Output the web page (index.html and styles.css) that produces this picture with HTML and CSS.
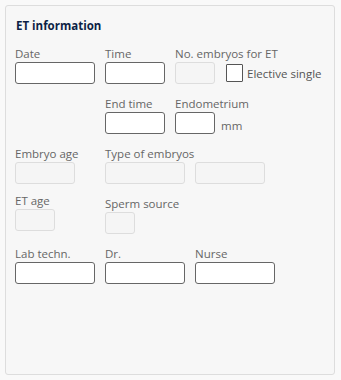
FILE: index.html
```html
<!DOCTYPE html>
<html lang="en">
<head>
    <meta charset="UTF-8">
    <meta name="viewport" content="width=device-width, initial-scale=1.0">
    <title>ET information</title>
    <link rel="stylesheet" href="styles.css">
</head>
<body>
    <div class="panel">
        <h3 class="panel-title">ET information</h3>

        <div class="row">
            <div class="field w80">
                <label>Date</label>
                <input type="text" class="w80">
            </div>
            <div class="field w60">
                <label>Time</label>
                <input type="text" class="w60">
            </div>
            <div class="field">
                <label>No. embryos for ET</label>
                <div class="inline">
                    <input type="text" class="w40" disabled>
                    <span class="check"></span>
                    <span class="check-label">Elective single</span>
                </div>
            </div>
        </div>

        <div class="row">
            <div class="field w80"></div>
            <div class="field w60">
                <label>End time</label>
                <input type="text" class="w60">
            </div>
            <div class="field">
                <label>Endometrium</label>
                <div class="inline">
                    <input type="text" class="w40">
                    <span class="unit">mm</span>
                </div>
            </div>
        </div>

        <div class="row">
            <div class="field w80">
                <label>Embryo age</label>
                <input type="text" class="w60" disabled>
            </div>
            <div class="field">
                <label>Type of embryos</label>
                <div class="inline">
                    <input type="text" class="w80" disabled>
                    <input type="text" class="w70" disabled>
                </div>
            </div>
        </div>

        <div class="row">
            <div class="field w80 raised">
                <label>ET age</label>
                <input type="text" class="w40" disabled>
            </div>
            <div class="field">
                <label>Sperm source</label>
                <input type="text" class="w30" disabled>
            </div>
        </div>

        <div class="row">
            <div class="field w80">
                <label>Lab techn.</label>
                <input type="text" class="w80">
            </div>
            <div class="field w80">
                <label>Dr.</label>
                <input type="text" class="w80">
            </div>
            <div class="field w80">
                <label>Nurse</label>
                <input type="text" class="w80">
            </div>
        </div>
    </div>
</body>
</html>
```

FILE: styles.css
```css
body {
    margin: 0;
    background: #f9f9f9;
    font-family: "Open Sans", "Noto Sans", sans-serif;
    font-size: 11.5px;
    color: #666;
}

.panel {
    box-sizing: border-box;
    width: 330px;
    height: 370px;
    margin: 5px;
    padding: 12px 9px 9px;
    background: #f7f7f7;
    border: 1px solid #ddd;
    border-radius: 3px;
}

.panel-title {
    margin: 0 0 12px 1px;
    font-size: 11.5px;
    font-weight: bold;
    line-height: 16px;
    color: #0c1f45;
}

.row {
    display: flex;
    gap: 10px;
    margin-bottom: 12px;
}

.field {
    display: flex;
    flex-direction: column;
}

.field label {
    line-height: 16px;
}

.field.raised {
    margin-top: -3px;
}

.inline {
    display: flex;
    align-items: center;
    gap: 10px;
}

input {
    box-sizing: border-box;
    height: 22px;
    margin: 0;
    padding: 2px 4px;
    background: #fff;
    border: 1px solid #666;
    border-radius: 3px;
    font: inherit;
}

input:disabled {
    background: #f5f5f5;
    border-color: #ddd;
}

.w30 { width: 30px; }
.w40 { width: 40px; }
.w60 { width: 60px; }
.w70 { width: 70px; }
.w80 { width: 80px; }

.check {
    box-sizing: border-box;
    width: 17px;
    height: 18px;
    margin-left: 1px;
    background: #fff;
    border: 1px solid #555;
    border-radius: 1px;
}

.check-label {
    margin-left: -6px;
    color: #555;
}

.unit {
    margin-left: -4px;
    color: #666;
    padding-top: 4px;
}
```
